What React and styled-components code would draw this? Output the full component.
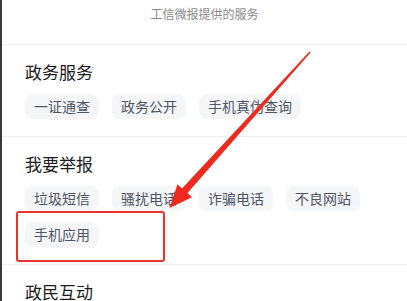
import React from "react";
import styled, { createGlobalStyle } from "styled-components";

const Global = createGlobalStyle`
  html, body { margin: 0; padding: 0; background: #fff; }
  body { font-family: "Noto Sans CJK SC", "Noto Sans", sans-serif; }
`;

const Page = styled.div`
  position: relative;
  width: 407px;
  height: 301px;
  overflow: hidden;
  background: #fff;
  border-left: 2px solid #3a3a3a;
  box-sizing: border-box;
`;

const Header = styled.div`
  height: 45px;
  box-sizing: border-box;
  padding-top: 6px;
  text-align: center;
  font-size: 12px;
  line-height: 16px;
  color: #8a8a8a;
  border-bottom: 1px solid #efefef;
`;

const Section = styled.section`
  padding: 15px 0 17px 23px;
  border-bottom: 1px solid #efefef;
`;

const Title = styled.h2`
  margin: 0 0 10px;
  font-size: 17px;
  line-height: 24px;
  font-weight: 400;
  color: #1c1c1c;
`;

const Tags = styled.div`
  display: flex;
  flex-wrap: wrap;
  column-gap: 13px;
  row-gap: 11px;
`;

const Tag = styled.span`
  display: inline-flex;
  align-items: center;
  height: 25px;
  padding: 0 9px;
  border-radius: 8px;
  background: #f5f6f8;
  color: #4f5566;
  font-size: 14px;
  line-height: 25px;
`;

const Highlight = styled.div`
  position: absolute;
  left: 14px;
  top: 211px;
  width: 149px;
  height: 51px;
  box-sizing: border-box;
  border: 2px solid #e8342a;
  border-radius: 3px;
  pointer-events: none;
`;

const ArrowSvg = styled.svg`
  position: absolute;
  left: 0;
  top: 0;
  pointer-events: none;
`;

const sections = [
  { title: "政务服务", tags: ["一证通查", "政务公开", "手机真伪查询"] },
  { title: "我要举报", tags: ["垃圾短信", "骚扰电话", "诈骗电话", "不良网站", "手机应用"] },
  { title: "政民互动", tags: [] },
];

export default function App() {
  return (
    <>
      <Global />
      <Page>
        <Header>工信微报提供的服务</Header>
        {sections.map((s) => (
          <Section key={s.title}>
            <Title>{s.title}</Title>
            {s.tags.length > 0 && (
              <Tags>
                {s.tags.map((t) => (
                  <Tag key={t}>{t}</Tag>
                ))}
              </Tags>
            )}
          </Section>
        ))}
        <Highlight />
        <ArrowSvg width="407" height="301" viewBox="0 0 407 301">
          <polygon
            points="307.4,51.6 308.6,52.4 185.5,193 190,197.2 167.5,208 175.5,184.3 180,188.5"
            fill="#ee2a1e"
          />
        </ArrowSvg>
      </Page>
    </>
  );
}
